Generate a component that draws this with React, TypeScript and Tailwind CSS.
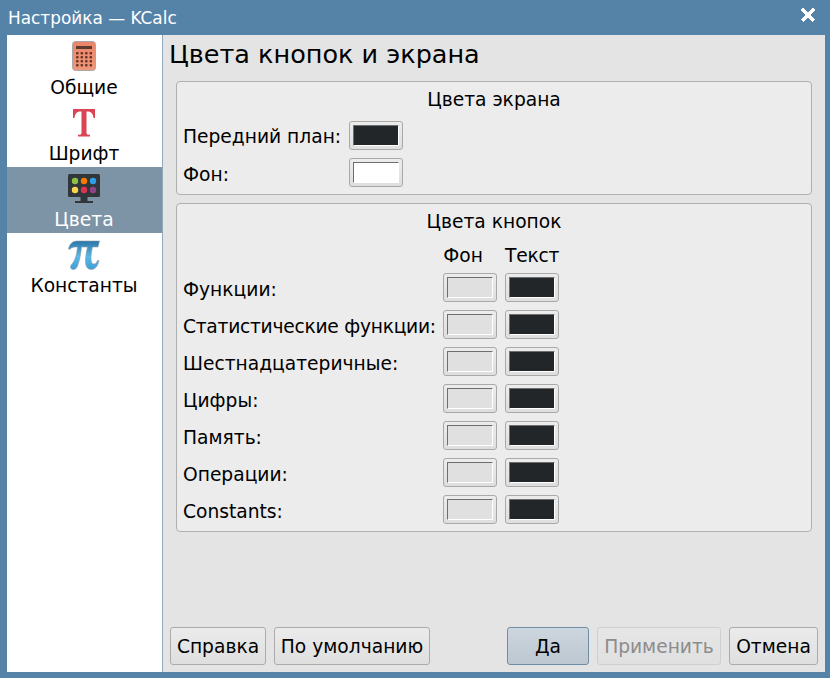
import React from 'react';

const ColorButton = ({ color }: { color: 'dark' | 'white' | 'light' }) => {
  const fill = color === 'dark' ? 'bg-[#232629]' : color === 'white' ? 'bg-white' : 'bg-[#e0e0e0]';
  return (
    <div className="w-[54px] h-[29px] shrink-0 rounded-[3px] border border-[#a9a9a9] bg-gradient-to-b from-[#ececec] to-[#dedede] p-[3px]">
      <div className={`w-full h-full border border-t-[#6e6e6e] border-l-[#6e6e6e] border-r-white border-b-white ${fill}`} />
    </div>
  );
};

const DialogButton = ({ children, className = '' }: { children: React.ReactNode; className?: string }) => (
  <button className={`h-[38px] pt-[1px] rounded-[3px] border border-[#ababab] bg-gradient-to-b from-[#ebebeb] to-[#dfdfdf] text-black flex items-center justify-center ${className}`}>
    {children}
  </button>
);

const CalcIcon = () => (
  <svg width="24" height="30" viewBox="0 0 24 30" className="-mt-[1px]">
    <defs>
      <linearGradient id="calc" x1="0" y1="0" x2="0" y2="1">
        <stop offset="0" stopColor="#e98468" />
        <stop offset="1" stopColor="#f0987c" />
      </linearGradient>
    </defs>
    <rect x="0.5" y="0.5" width="23" height="29" rx="3" fill="url(#calc)" stroke="#a8a8a8" />
    <rect x="4" y="5" width="16" height="3" fill="#5c3a30" />
    {[11, 15, 19, 23].map((y) =>
      [4, 8.5, 13, 17.5].map((x) => <rect key={`${x}-${y}`} x={x} y={y} width="2.6" height="2.6" rx="1" fill="#6b3526" />)
    )}
  </svg>
);

const FontIcon = () => (
  <svg width="24" height="28" viewBox="0 0 24 28">
    <path d="M1 0H23V9H21.5C21 5 19.5 2.5 15.5 2.5H14.5V24C14.5 25.3 15.5 25.8 18 25.8V27.5H6V25.8C8.5 25.8 9.5 25.3 9.5 24V2.5H8.5C4.5 2.5 3 5 2.5 9H1Z" fill="#da4453" />
  </svg>
);

const ColorsIcon = () => (
  <svg width="32" height="30" viewBox="0 0 32 30">
    <rect x="0" y="0" width="32" height="23" rx="1.5" fill="#31363b" />
    <rect x="12.5" y="23" width="7" height="4" fill="#31363b" />
    <rect x="7" y="27" width="18" height="2" fill="#31363b" />
    <circle cx="7" cy="7" r="3.2" fill="#8bc34a" />
    <circle cx="16" cy="7" r="3.2" fill="#f57c00" />
    <circle cx="25" cy="7" r="3.2" fill="#2e9fe6" />
    <circle cx="7" cy="16" r="3.2" fill="#fdd44b" />
    <circle cx="16" cy="16" r="3.2" fill="#da3450" />
    <circle cx="25" cy="16" r="3.2" fill="#8e4585" />
  </svg>
);

const PiIcon = () => (
  <svg width="32" height="30" viewBox="0 0 32 30">
    <defs>
      <linearGradient id="pi" x1="0" y1="0" x2="0" y2="1">
        <stop offset="0" stopColor="#2a76a8" />
        <stop offset="0.55" stopColor="#5bb8e8" />
        <stop offset="1" stopColor="#3c9fd6" />
      </linearGradient>
    </defs>
    <path d="M0.5 9C1.5 4 4.5 1 9 1H31.5L30 7H24.5C23.5 11 23 15 23 18C23 22 24 24 26 24C27.5 24 28.5 23 29.5 20.5H31C30 26 27 29.5 23.5 29.5C19.5 29.5 17.5 26.5 17.5 21.5C17.5 16 18.5 11 19.5 7H13.5C13 13 11.5 21 9.5 26C8.5 28.5 7 29.5 5.5 29.5C3.5 29.5 2.5 28.5 2.5 27C2.5 25 5 23.5 6.5 20C8.5 16 9 11 9.5 7H7C4.5 7 3 8 1.5 9.5Z" fill="url(#pi)" stroke="#8f9ba3" strokeWidth="0.6" />
  </svg>
);

const sections = [
  { label: 'Общие', icon: <CalcIcon /> },
  { label: 'Шрифт', icon: <FontIcon /> },
  { label: 'Цвета', icon: <ColorsIcon />, active: true },
  { label: 'Константы', icon: <PiIcon /> },
];

const buttonRows = [
  'Функции:',
  'Статистические функции:',
  'Шестнадцатеричные:',
  'Цифры:',
  'Память:',
  'Операции:',
  'Constants:',
];

export default function App() {
  return (
    <div className="w-[830px] h-[678px] bg-[#5583a8] flex flex-col overflow-hidden text-[18.67px] leading-[22px] text-black font-['DejaVu_Sans',sans-serif]">
      <div className="h-[35px] shrink-0 pl-[8px] pr-[14px] flex items-center justify-between text-white text-[16.9px]">
        <span>Настройка — KCalc</span>
        <svg width="16" height="16" viewBox="0 0 16 16" shapeRendering="crispEdges" className="mb-[5px]">
          <path d="M2 2L14 14M14 2L2 14" stroke="white" strokeWidth="3.4" />
        </svg>
      </div>

      <div className="flex h-[637px] ml-[7px] mr-[5px]">
        <div className="w-[156px] shrink-0 bg-white border-r border-[#8fa9bd]">
          {sections.map((s) => (
            <div
              key={s.label}
              className={`h-[66px] pr-[1px] flex flex-col items-center ${s.active ? 'bg-[#7d93a6] text-white' : ''}`}
            >
              <div className="h-[40px] flex items-center justify-center pt-[3px]">{s.icon}</div>
              <span className="mt-[2px]">{s.label}</span>
            </div>
          ))}
        </div>

        <div className="flex-1 bg-[#e4e4e4] flex flex-col pl-[7px] pr-[7px]">
          <h1 className="text-[25.5px] leading-[30px] mt-[4px] -ml-[1px]">Цвета кнопок и экрана</h1>

          <div className="mt-[12px] ml-[6px] mr-[6px] h-[114px] rounded-[4px] border border-[#b0b0b0] bg-[#ececec] px-[6px]">
            <div className="text-center mt-[7px]">Цвета экрана</div>
            <div className="mt-[10px] flex items-center">
              <span className="w-[166px] pt-[3px]">Передний план:</span>
              <ColorButton color="dark" />
            </div>
            <div className="mt-[8px] flex items-center">
              <span className="w-[166px] pt-[4px]">Фон:</span>
              <ColorButton color="white" />
            </div>
          </div>

          <div className="mt-[8px] ml-[6px] mr-[6px] h-[329px] rounded-[4px] border border-[#b0b0b0] bg-[#ececec] px-[6px]">
            <div className="text-center mt-[7px]">Цвета кнопок</div>
            <div className="mt-[12px] flex pl-[260px] gap-[8px] leading-[22px]">
              <span className="w-[40px] text-center">Фон</span>
              <span className="ml-[14px] w-[54px] whitespace-nowrap tracking-[-0.2px]">Текст</span>
            </div>
            <div className="mt-[6px] flex flex-col gap-[8px]">
              {buttonRows.map((row) => (
                <div key={row} className="flex items-center h-[29px]">
                  <span className={`w-[260px] whitespace-nowrap pt-[4px] ${row.startsWith('Статистические') ? 'tracking-[-0.26px]' : ''}`}>{row}</span>
                  <div className="flex gap-[8px]">
                    <ColorButton color="light" />
                    <ColorButton color="dark" />
                  </div>
                </div>
              ))}
            </div>
          </div>

          <div className="mt-auto mb-[7px] flex items-center">
            <DialogButton className="w-[96px]">Справка</DialogButton>
            <DialogButton className="w-[156px] ml-[8px]">По умолчанию</DialogButton>
            <DialogButton className="w-[82px] ml-auto !border-[#6f8ea6] !from-[#cdd6de] !to-[#bcc7d1]">Да</DialogButton>
            <DialogButton className="w-[124px] ml-[8px] !border-[#cfcfcf] !from-[#e6e6e6] !to-[#e0e0e0] !text-[#8c8c8c]">Применить</DialogButton>
            <DialogButton className="w-[89px] ml-[8px]">Отмена</DialogButton>
          </div>
        </div>
      </div>
    </div>
  );
}
